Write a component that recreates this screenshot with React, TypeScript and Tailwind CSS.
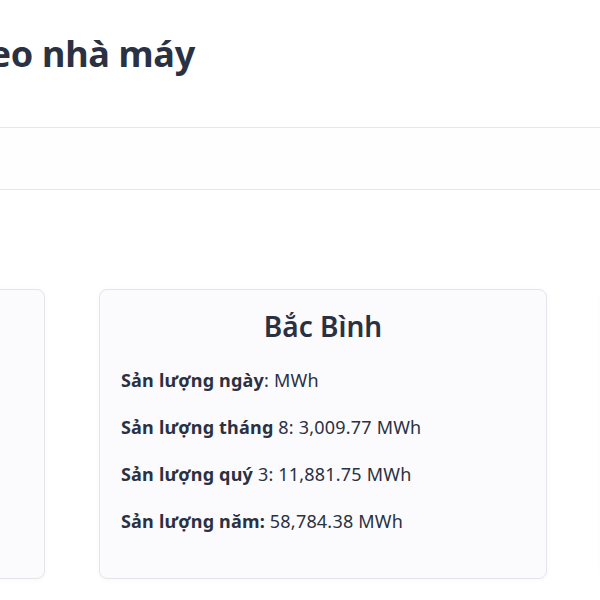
export default function App() {
  const rows = [
    { label: "Sản lượng ngày", rest: ": MWh" },
    { label: "Sản lượng tháng", rest: " 8: 3,009.77 MWh" },
    { label: "Sản lượng quý", rest: " 3: 11,881.75 MWh" },
    { label: "Sản lượng năm:", rest: " 58,784.38 MWh" },
  ];

  return (
    <div className="w-[600px] h-[600px] overflow-hidden bg-white text-[#2a3142] font-['Noto_Sans',sans-serif]">
      <h1 className="mt-[30px] -ml-[238px] whitespace-nowrap text-[36px] leading-[48px] font-bold tracking-[-0.3px]">
        Sản lượng theo nhà máy
      </h1>
      <div className="mt-[49px] h-[63px] border-y border-[#e7e7e9] bg-[#fefefe]" />
      <div className="mt-[99px] flex gap-[54px] -ml-[403px]">
        {[0, 1, 2].map((i) => (
          <div
            key={i}
            className="w-[448px] h-[290px] shrink-0 rounded-lg border border-[#e4e4ea] bg-[#fbfbfd] px-[21px] pt-[16px] shadow-[0_1px_6px_rgba(0,0,0,0.03)]"
          >
            {i === 1 && (
              <>
                <h2 className="text-center text-[28px] leading-[40px] font-semibold">Bắc Bình</h2>
                <div className="mt-[21px] flex flex-col gap-[21px]">
                  {rows.map((r) => (
                    <p key={r.label} className="text-[18px] leading-[26px] tracking-[0.2px] whitespace-nowrap">
                      <b className="font-bold">{r.label}</b>
                      {r.rest}
                    </p>
                  ))}
                </div>
              </>
            )}
          </div>
        ))}
      </div>
    </div>
  );
}
